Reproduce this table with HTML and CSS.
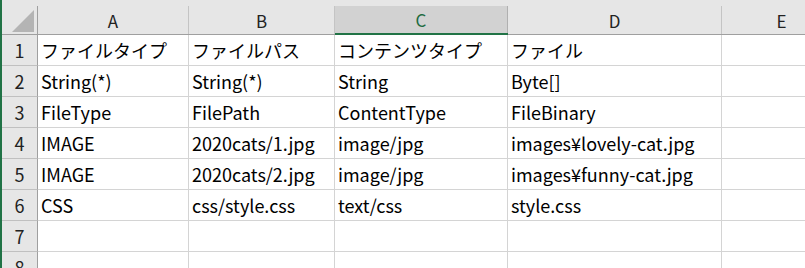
FILE: index.html
```html
<!DOCTYPE html>
<html lang="ja">
<head>
    <meta charset="UTF-8">
    <meta name="viewport" content="width=device-width, initial-scale=1.0">
    <title>Sheet1</title>
    <link rel="stylesheet" href="styles.css">
</head>
<body>
    <div class="sheet">
        <div class="corner">
            <svg class="corner-mark" width="22" height="22" viewBox="0 0 22 22">
                <polygon points="22,0 22,22 0,22" fill="#b4b4b4"/>
            </svg>
        </div>
        <div class="col-head"><span class="label">A</span></div>
        <div class="col-head"><span class="label">B</span></div>
        <div class="col-head selected"><span class="label">C</span></div>
        <div class="col-head"><span class="label">D</span></div>
        <div class="col-head"><span class="label">E</span></div>

        <div class="row-head">1</div>
        <div class="cell">ファイルタイプ</div>
        <div class="cell">ファイルパス</div>
        <div class="cell">コンテンツタイプ</div>
        <div class="cell">ファイル</div>
        <div class="cell"></div>

        <div class="row-head">2</div>
        <div class="cell">String(*)</div>
        <div class="cell">String(*)</div>
        <div class="cell">String</div>
        <div class="cell">Byte[]</div>
        <div class="cell"></div>

        <div class="row-head">3</div>
        <div class="cell">FileType</div>
        <div class="cell">FilePath</div>
        <div class="cell">ContentType</div>
        <div class="cell">FileBinary</div>
        <div class="cell"></div>

        <div class="row-head">4</div>
        <div class="cell">IMAGE</div>
        <div class="cell">2020cats/1.jpg</div>
        <div class="cell">image/jpg</div>
        <div class="cell">images¥lovely-cat.jpg</div>
        <div class="cell"></div>

        <div class="row-head">5</div>
        <div class="cell">IMAGE</div>
        <div class="cell">2020cats/2.jpg</div>
        <div class="cell">image/jpg</div>
        <div class="cell">images¥funny-cat.jpg</div>
        <div class="cell"></div>

        <div class="row-head">6</div>
        <div class="cell">CSS</div>
        <div class="cell">css/style.css</div>
        <div class="cell">text/css</div>
        <div class="cell">style.css</div>
        <div class="cell"></div>

        <div class="row-head">7</div>
        <div class="cell"></div>
        <div class="cell"></div>
        <div class="cell"></div>
        <div class="cell"></div>
        <div class="cell"></div>

        <div class="row-head">8</div>
        <div class="cell"></div>
        <div class="cell"></div>
        <div class="cell"></div>
        <div class="cell"></div>
        <div class="cell"></div>
    </div>
</body>
</html>
```

FILE: styles.css
```css
body {
    margin: 0;
    padding: 0;
    background-color: #fff;
    font-family: "Noto Sans CJK JP", "Noto Sans", sans-serif;
    font-size: 18px;
    color: #000;
    overflow: hidden;
}
.sheet {
    display: grid;
    grid-template-columns: 36px 151px 146px 173px 214px 120px;
    grid-template-rows: 35px;
    grid-auto-rows: 31px;
    border-left: 2px solid #217346;
}
.corner, .col-head, .row-head, .cell {
    box-sizing: border-box;
}
.corner {
    background-color: #e6e6e6;
    border-bottom: 1px solid #9f9f9f;
    padding-top: 6px;
    position: relative;
}
.corner::after {
    content: "";
    position: absolute;
    right: 0;
    top: 6px;
    bottom: 0;
    width: 1px;
    background-color: #9f9f9f;
}
.corner-mark {
    display: block;
    margin: 4px 0 0 10px;
}
.col-head {
    background-color: #e6e6e6;
    border-bottom: 1px solid #9f9f9f;
    padding-top: 6px;
    font-size: 17px;
    color: #222;
}
.col-head .label {
    display: flex;
    align-items: center;
    justify-content: center;
    height: 100%;
    border-right: 1px solid #c4c4c4;
    box-sizing: border-box;
}
.col-head.selected {
    border-bottom: 2px solid #217346;
}
.col-head.selected .label {
    background-color: #d2d2d2;
    color: #1e6b41;
    border-right-color: #b0b0b0;
}
.row-head {
    background-color: #e6e6e6;
    border-right: 1px solid #9f9f9f;
    border-bottom: 1px solid #c0c0c0;
    display: flex;
    align-items: center;
    justify-content: center;
    color: #222;
}
.cell {
    border-right: 1px solid #d4d4d4;
    border-bottom: 1px solid #d4d4d4;
    display: flex;
    align-items: center;
    padding: 0 3px;
    white-space: nowrap;
}
```
